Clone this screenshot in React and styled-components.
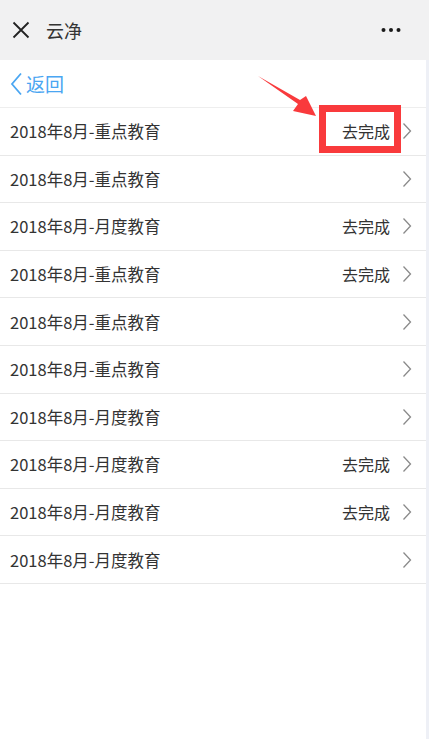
import React from "react";
import styled, { createGlobalStyle } from "styled-components";

const GlobalStyle = createGlobalStyle`
  html, body {
    margin: 0;
    padding: 0;
    background: #ffffff;
    font-family: "Noto Sans CJK SC", "Noto Sans", sans-serif;
  }
`;

const Page = styled.div`
  width: 429px;
  min-height: 739px;
  display: flex;
  flex-direction: column;
  background: #ffffff;
`;

const TopBar = styled.header`
  height: 60px;
  background: #f1f1f2;
  display: flex;
  align-items: center;
  padding: 0 28px 0 12px;
  box-sizing: border-box;
`;

const Title = styled.div`
  margin-left: 16px;
  font-size: 18px;
  color: #333333;
  flex: 1;
`;

const Body = styled.div`
  flex: 1;
  display: flex;
  border-right: 3px solid #eef0f6;
  position: relative;
`;

const Content = styled.div`
  flex: 1;
`;

const BackBar = styled.div`
  height: 48px;
  display: flex;
  align-items: center;
  padding-left: 10px;
  color: #4aa6f2;
  font-size: 19px;
  gap: 3px;
  border-bottom: 1px solid #eeeeee;
  box-sizing: border-box;
`;

const Row = styled.div`
  height: 47.6px;
  box-sizing: border-box;
  border-bottom: 1px solid #e8e8e8;
  display: flex;
  align-items: center;
  padding: 0 14px 0 10px;
  font-size: 16px;
  color: #333333;
`;

const RowTitle = styled.span`
  flex: 1;
  font-size: 16.5px;
`;

const Action = styled.span`
  color: #333333;
  margin-right: 12px;
`;

const Highlight = styled.div`
  position: absolute;
  left: 319px;
  top: 45px;
  width: 82px;
  height: 48px;
  border: 7px solid #f93a3c;
  box-sizing: border-box;
`;

const Arrow = styled.svg`
  position: absolute;
  left: 255px;
  top: 12px;
`;

const Chevron = () => (
  <svg width="10" height="18" viewBox="0 0 10 18">
    <path d="M1.5 1.5 L8.5 9 L1.5 16.5" fill="none" stroke="#8a8a8a" strokeWidth="1.3" />
  </svg>
);

const items = [
  { name: "2018年8月-重点教育", todo: true },
  { name: "2018年8月-重点教育", todo: false },
  { name: "2018年8月-月度教育", todo: true },
  { name: "2018年8月-重点教育", todo: true },
  { name: "2018年8月-重点教育", todo: false },
  { name: "2018年8月-重点教育", todo: false },
  { name: "2018年8月-月度教育", todo: false },
  { name: "2018年8月-月度教育", todo: true },
  { name: "2018年8月-月度教育", todo: true },
  { name: "2018年8月-月度教育", todo: false },
];

export default function App() {
  return (
    <Page>
      <GlobalStyle />
      <TopBar>
        <svg width="18" height="18" viewBox="0 0 18 18">
          <path d="M1.5 1.5 L16.5 16.5 M16.5 1.5 L1.5 16.5" stroke="#222" strokeWidth="1.8" />
        </svg>
        <Title>云净</Title>
        <svg width="20" height="6" viewBox="0 0 20 6">
          <circle cx="2.5" cy="3" r="2" fill="#1a1a1a" />
          <circle cx="10" cy="3" r="2" fill="#1a1a1a" />
          <circle cx="17.5" cy="3" r="2" fill="#1a1a1a" />
        </svg>
      </TopBar>
      <Body>
        <Content>
          <BackBar>
            <svg width="13" height="24" viewBox="0 0 13 24">
              <path d="M11 1.5 L2 12 L11 22.5" fill="none" stroke="#4aa6f2" strokeWidth="1.8" />
            </svg>
            返回
          </BackBar>
          {items.map((it, i) => (
            <Row key={i}>
              <RowTitle>{it.name}</RowTitle>
              {it.todo && <Action>去完成</Action>}
              <Chevron />
            </Row>
          ))}
        </Content>
        <Arrow width="70" height="60" viewBox="0 0 70 60">
          <polygon points="3,4 45,28 51,24 61,44 38,39 43,32" fill="#f93a3c" />
        </Arrow>
        <Highlight />
      </Body>
    </Page>
  );
}
